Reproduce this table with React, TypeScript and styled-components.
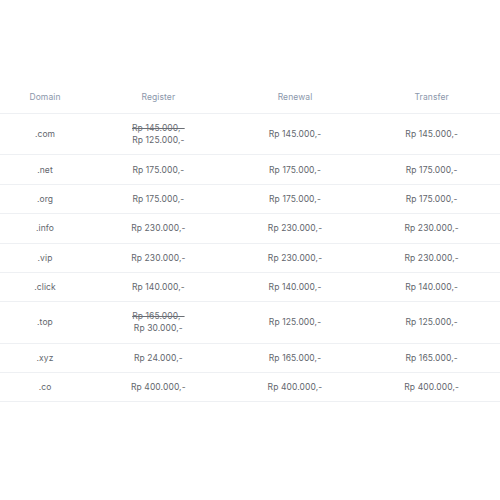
import styled, { createGlobalStyle } from "styled-components";

interface DomainPrice {
  tld: string;
  register: string;
  registerOld?: string;
  renewal: string;
  transfer: string;
}

const prices: DomainPrice[] = [
  { tld: ".com", registerOld: "Rp 145.000,-", register: "Rp 125.000,-", renewal: "Rp 145.000,-", transfer: "Rp 145.000,-" },
  { tld: ".net", register: "Rp 175.000,-", renewal: "Rp 175.000,-", transfer: "Rp 175.000,-" },
  { tld: ".org", register: "Rp 175.000,-", renewal: "Rp 175.000,-", transfer: "Rp 175.000,-" },
  { tld: ".info", register: "Rp 230.000,-", renewal: "Rp 230.000,-", transfer: "Rp 230.000,-" },
  { tld: ".vip", register: "Rp 230.000,-", renewal: "Rp 230.000,-", transfer: "Rp 230.000,-" },
  { tld: ".click", register: "Rp 140.000,-", renewal: "Rp 140.000,-", transfer: "Rp 140.000,-" },
  { tld: ".top", registerOld: "Rp 165.000,-", register: "Rp 30.000,-", renewal: "Rp 125.000,-", transfer: "Rp 125.000,-" },
  { tld: ".xyz", register: "Rp 24.000,-", renewal: "Rp 165.000,-", transfer: "Rp 165.000,-" },
  { tld: ".co", register: "Rp 400.000,-", renewal: "Rp 400.000,-", transfer: "Rp 400.000,-" },
];

const GlobalStyle = createGlobalStyle`
  body {
    margin: 0;
    background: #ffffff;
    font-family: Inter, "Noto Sans", sans-serif;
  }
`;

const Page = styled.div`
  padding-top: 81px;
`;

const PriceTable = styled.table`
  width: 100%;
  border-collapse: collapse;
  table-layout: fixed;
`;

const HeadCell = styled.th<{ $width?: number }>`
  width: ${(p) => (p.$width ? `${p.$width}px` : "auto")};
  padding: 10px 0;
  line-height: 12px;
  font-size: 8.5px;
  font-weight: 400;
  color: #8b97ab;
  text-align: center;
  border-bottom: 1px solid #eef0f3;
  letter-spacing: 0.1px;
`;

const Row = styled.tr`
  border-bottom: 1px solid #eef0f3;
`;

const Cell = styled.td`
  padding: 8.2px 0;
  line-height: 12px;
  font-size: 8.5px;
  color: #62666d;
  text-align: center;
  letter-spacing: 0.1px;
`;

const OldPrice = styled.div`
  text-decoration: line-through;
  color: #6a6e75;
`;

export default function App() {
  return (
    <>
      <GlobalStyle />
      <Page>
        <PriceTable>
          <thead>
            <tr>
              <HeadCell $width={90}>Domain</HeadCell>
              <HeadCell>Register</HeadCell>
              <HeadCell>Renewal</HeadCell>
              <HeadCell>Transfer</HeadCell>
            </tr>
          </thead>
          <tbody>
            {prices.map((item) => (
              <Row key={item.tld}>
                <Cell>{item.tld}</Cell>
                <Cell>
                  {item.registerOld && <OldPrice>{item.registerOld}</OldPrice>}
                  <div>{item.register}</div>
                </Cell>
                <Cell>{item.renewal}</Cell>
                <Cell>{item.transfer}</Cell>
              </Row>
            ))}
          </tbody>
        </PriceTable>
      </Page>
    </>
  );
}
